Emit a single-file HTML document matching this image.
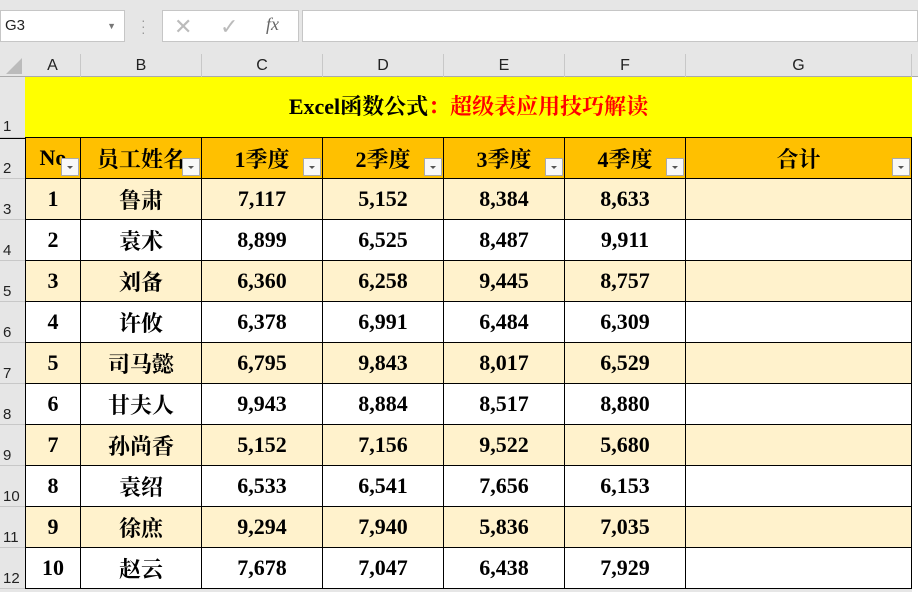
<!DOCTYPE html><html><head><meta charset="utf-8"><style>
html,body{margin:0;width:918px;height:592px;overflow:hidden}
body{background:#e6e6e6;font-family:"Liberation Sans",sans-serif;position:relative}
.a{position:absolute;box-sizing:border-box}
.cell{position:absolute;box-sizing:border-box;display:flex;align-items:center;justify-content:center;font-family:"Liberation Serif","Noto Serif CJK SC",serif;font-weight:bold;font-size:22px;color:#000;border-right:1px solid #000;border-bottom:1px solid #000}
.rn{position:absolute;left:0;width:25px;font-size:15px;color:#222;text-align:left;padding-left:3px;box-sizing:border-box;background:#e6e6e6;border-bottom:1px solid #c8c8c8}
.ch{position:absolute;top:54px;height:23px;font-size:16px;color:#222;text-align:center;line-height:24px;border-right:1px solid #c8c8c8;box-sizing:border-box}
.dd{position:absolute;width:18px;height:18px;background:#f8f8f8;border:1px solid #aaa;box-sizing:border-box}
.dd:after{content:"";position:absolute;left:5px;top:7px;border-left:3px solid transparent;border-right:3px solid transparent;border-top:3px solid #555}
</style></head><body>
<div class="a" style="left:0;top:10px;width:125px;height:32px;background:#fff;border:1px solid #c6c6c6;font-size:15px;line-height:30px;padding-left:4px;color:#222">G3<span style="position:absolute;right:8px;top:0;font-size:9px;color:#777">▼</span></div>
<div class="a" style="left:141px;top:17px;width:4px;height:18px;color:#999;font-size:14px;line-height:6px">·<br>·<br>·</div>
<div class="a" style="left:162px;top:10px;width:137px;height:32px;background:#fff;border:1px solid #c6c6c6"></div>
<div class="a" style="left:174px;top:14px;font-size:22px;color:#bbb">✕</div>
<div class="a" style="left:220px;top:14px;font-size:22px;color:#bbb">✓</div>
<div class="a" style="left:266px;top:14px;font-size:18px;color:#666;font-family:'Liberation Serif';font-style:italic">fx</div>
<div class="a" style="left:302px;top:10px;width:616px;height:32px;background:#fff;border:1px solid #c6c6c6"></div>
<div class="a" style="left:0;top:54px;width:918px;height:23px;background:#e6e6e6;border-bottom:1px solid #aaa"></div>
<div class="a" style="left:6px;top:58px;width:0;height:0;border-left:16px solid transparent;border-bottom:16px solid #bbb"></div>
<div class="ch" style="left:25px;width:56px">A</div><div class="ch" style="left:81px;width:121px">B</div><div class="ch" style="left:202px;width:121px">C</div><div class="ch" style="left:323px;width:121px">D</div><div class="ch" style="left:444px;width:121px">E</div><div class="ch" style="left:565px;width:121px">F</div><div class="ch" style="left:686px;width:226px">G</div>
<div class="a" style="left:912px;top:77px;width:6px;height:515px;background:#fff"></div>
<div class="a" style="left:25px;top:77px;width:887px;height:61px;background:#ffff00;border-bottom:1px solid #000;text-align:center;line-height:60px;font-family:'Liberation Serif','Noto Serif CJK SC',serif;font-weight:bold;font-size:22px">Excel函数公式<span style="color:#f00">：超级表应用技巧解读</span></div>
<div class="rn" style="top:77px;height:61px;line-height:100px">1</div>
<div id="g"></div>
<script>
var cols=[25,81,202,323,444,565,686,912];
var hdr=["No","员工姓名","1季度","2季度","3季度","4季度","合计"];
var d=[["1","鲁肃","7,117","5,152","8,384","8,633"],["2","袁术","8,899","6,525","8,487","9,911"],["3","刘备","6,360","6,258","9,445","8,757"],["4","许攸","6,378","6,991","6,484","6,309"],["5","司马懿","6,795","9,843","8,017","6,529"],["6","甘夫人","9,943","8,884","8,517","8,880"],["7","孙尚香","5,152","7,156","9,522","5,680"],["8","袁绍","6,533","6,541","7,656","6,153"],["9","徐庶","9,294","7,940","5,836","7,035"],["10","赵云","7,678","7,047","6,438","7,929"]];
var h='';
function row(y,hh,vals,bg,n){
 h+='<div class="rn" style="top:'+y+'px;height:'+hh+'px;line-height:'+(hh*2-20)+'px">'+n+'</div>';
 for(var i=0;i<7;i++){var w=cols[i+1]-cols[i];
  h+='<div class="cell" style="left:'+cols[i]+'px;top:'+y+'px;width:'+w+'px;height:'+hh+'px;background:'+bg+(i==0?';border-left:1px solid #000':'')+'">'+(vals[i]||'')+'</div>';}
}
row(138,41,hdr,'#ffc000',2);
for(var i=0;i<7;i++){h+='<div class="dd" style="left:'+(cols[i+1]-20)+'px;top:158px"></div>';}
for(var r=0;r<10;r++)row(179+41*r,41,d[r],r%2==0?'#fff2cc':'#fff',r+3);
document.getElementById('g').innerHTML=h;
</script>
<div class="a" style="left:0;top:138px;width:26px;height:1px;background:#000"></div>
</body></html>
